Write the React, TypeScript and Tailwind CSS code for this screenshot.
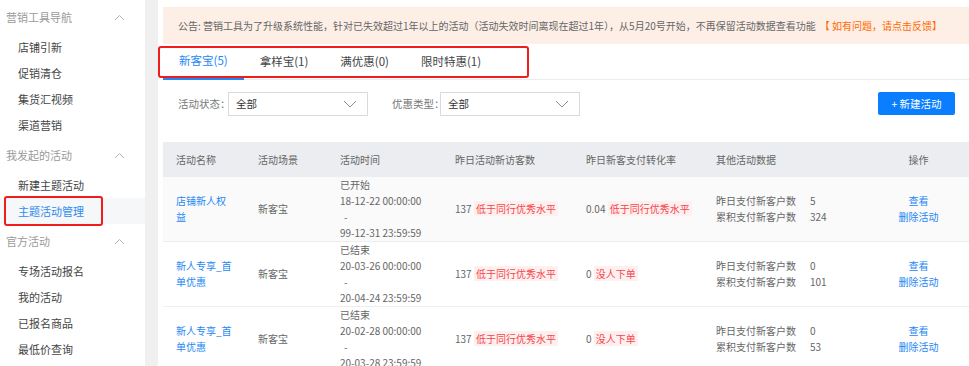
import React from "react";

const font = { fontFamily: '"Noto Sans CJK SC", "Noto Sans", sans-serif' };

const sideGroups = [
  { title: "营销工具导航", items: ["店铺引新", "促销清仓", "集货汇视频", "渠道营销"] },
  { title: "我发起的活动", items: ["新建主题活动", "主题活动管理"] },
  { title: "官方活动", items: ["专场活动报名", "我的活动", "已报名商品", "最低价查询"] },
];

const tabs = ["新客宝(5)", "拿样宝(1)", "满优惠(0)", "限时特惠(1)"];

const rows = [
  {
    name: "店铺新人权益",
    status: "已开始",
    start: "18-12-22 00:00:00",
    end: "99-12-31 23:59:59",
    rate: "0.04",
    rateTag: "低于同行优秀水平",
    yesterday: "5",
    total: "324",
    bg: "bg-[#fafafa]",
  },
  {
    name: "新人专享_首单优惠",
    status: "已结束",
    start: "20-03-26 00:00:00",
    end: "20-04-24 23:59:59",
    rate: "0",
    rateTag: "没人下单",
    yesterday: "0",
    total: "101",
    bg: "bg-white",
  },
  {
    name: "新人专享_首单优惠",
    status: "已结束",
    start: "20-02-28 00:00:00",
    end: "20-03-28 23:59:59",
    rate: "0",
    rateTag: "没人下单",
    yesterday: "0",
    total: "53",
    bg: "bg-white",
  },
];

const ChevronUp = () => (
  <svg width="11" height="7" viewBox="0 0 11 7" fill="none">
    <path d="M1 6L5.5 1.5L10 6" stroke="#b5b5b5" strokeWidth="1" />
  </svg>
);

const ChevronDown = () => (
  <svg width="14" height="8" viewBox="0 0 14 8" fill="none">
    <path d="M1 1L7 7L13 1" stroke="#8c8c8c" strokeWidth="1" />
  </svg>
);

const Tag = ({ children }: { children: React.ReactNode }) => (
  <span className="bg-[#fff0f0] text-[#f5454a] px-[2px]">{children}</span>
);

const Select = () => (
  <div className="w-[140px] h-[24px] shrink-0 border border-[#d9d9d9] bg-white flex items-center justify-between pl-[7px] pr-[10px] text-[#333]">
    <span>全部</span>
    <ChevronDown />
  </div>
);

export default function App() {
  return (
    <div style={font} className="w-[969px] h-[366px] overflow-hidden flex bg-[#f0f0f0] text-[11px]">
      {/* sidebar */}
      <div className="w-[145px] shrink-0 bg-white">
        {sideGroups.map((g) => (
          <div key={g.title}>
            <div className="h-[34px] flex items-center justify-between pl-[6px] pr-[20px] text-[#9a9a9a]">
              <span>{g.title}</span>
              <ChevronUp />
            </div>
            {g.items.map((it) =>
              it === "主题活动管理" ? (
                <div key={it} className="relative h-[26px] flex items-center pl-[18px] bg-[#f6f7f9] text-[#2d8cf0]">
                  {it}
                  <div className="absolute left-[4px] top-[-2px] w-[99px] h-[30px] border-2 border-[#f01d1d] rounded-[3px]" />
                </div>
              ) : (
                <div key={it} className="h-[26px] flex items-center pl-[18px] text-[#444]">
                  {it}
                </div>
              )
            )}
          </div>
        ))}
      </div>

      {/* main */}
      <div className="ml-[13px] flex-1 min-w-0 overflow-hidden bg-white pl-[5px] pt-[7px]">
        <div className="h-[37px] bg-[#fdefe6] flex items-center pl-[15px] text-[#666] text-[10px] whitespace-nowrap">
          公告: 营销工具为了升级系统性能，针对已失效超过1年以上的活动（活动失效时间离现在超过1年），从5月20号开始，不再保留活动数据查看功能
          <span className="text-[#ff6a00] ml-[4px]">【 如有问题，请点击反馈】</span>
        </div>

        <div className="relative h-[36px] border-b border-[#ececec] flex text-[11.5px]">
          {tabs.map((t, i) => (
            <div
              key={t}
              className={
                i === 0
                  ? "px-[16px] h-[36px] flex items-center text-[#1e88f5] border-b-2 border-[#1e88f5]"
                  : "px-[16px] h-[36px] flex items-center text-[#444]"
              }
            >
              {t}
            </div>
          ))}
          <div className="absolute left-[-5px] top-[2px] w-[371px] h-[32px] border-2 border-[#f01d1d] rounded-[3px]" />
        </div>

        <div className="h-[62px] flex items-start pt-[12px] pl-[15px] pr-[14px] text-[10.5px]">
          <div className="flex items-center text-[#777] whitespace-nowrap">
            <span className="w-[50px] shrink-0">活动状态：</span>
            <Select />
            <span className="ml-[24px] w-[48px] shrink-0">优惠类型：</span>
            <Select />
          </div>
          <button className="ml-auto w-[77px] h-[23px] bg-[#0b7dff] text-white rounded-[2px] flex items-center justify-center">
            + 新建活动
          </button>
        </div>

        <table className="table-fixed w-full border-collapse text-[#666] text-[10px]">
          <colgroup>
            <col className="w-[82px]" />
            <col className="w-[82px]" />
            <col className="w-[115px]" />
            <col className="w-[131px]" />
            <col className="w-[130px]" />
            <col className="w-[165px]" />
            <col />
          </colgroup>
          <thead>
            <tr className="bg-[#ebedf0] h-[35px] text-left">
              <th className="font-normal pl-[13px]">活动名称</th>
              <th className="font-normal pl-[13px]">活动场景</th>
              <th className="font-normal pl-[13px]">活动时间</th>
              <th className="font-normal pl-[13px]">昨日活动新访客数</th>
              <th className="font-normal pl-[13px]">昨日新客支付转化率</th>
              <th className="font-normal pl-[13px]">其他活动数据</th>
              <th className="font-normal text-center">操作</th>
            </tr>
          </thead>
          <tbody>
            {rows.map((r, i) => (
              <tr key={i} className={`${r.bg} border-b border-[#eeeeee] leading-[16px]`}>
                <td className="pl-[13px] align-middle">
                  <div className="w-[57px] text-[#1e88f5] break-all">{r.name}</div>
                </td>
                <td className="pl-[13px]">新客宝</td>
                <td className="pl-[13px] whitespace-nowrap">
                  <div>{r.status}</div>
                  <div>{r.start}</div>
                  <div className="pl-[4px]">-</div>
                  <div>{r.end}</div>
                </td>
                <td className="pl-[13px] whitespace-nowrap">
                  137 <Tag>低于同行优秀水平</Tag>
                </td>
                <td className="pl-[13px] whitespace-nowrap">
                  {r.rate} <Tag>{r.rateTag}</Tag>
                </td>
                <td className="pl-[13px] whitespace-nowrap">
                  <div className="flex">
                    <span className="w-[94px]">昨日支付新客户数</span>
                    <span>{r.yesterday}</span>
                  </div>
                  <div className="flex">
                    <span className="w-[94px]">累积支付新客户数</span>
                    <span>{r.total}</span>
                  </div>
                </td>
                <td className="text-center text-[#1e88f5]">
                  <div>查看</div>
                  <div>删除活动</div>
                </td>
              </tr>
            ))}
          </tbody>
        </table>
      </div>
    </div>
  );
}
